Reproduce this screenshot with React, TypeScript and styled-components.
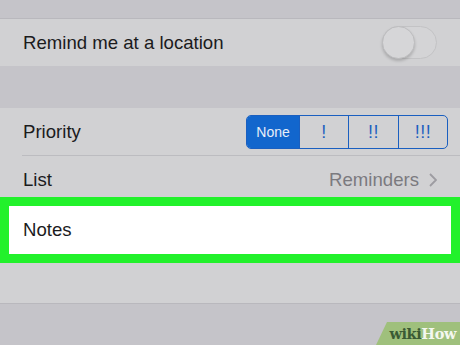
import React from "react";
import styled, { createGlobalStyle } from "styled-components";

const Global = createGlobalStyle`
  html, body { margin: 0; padding: 0; }
  body { background: #c5c4c9; font-family: "Liberation Sans", Arial, sans-serif; }
`;

const Page = styled.div`
  position: relative;
  width: 460px;
  height: 345px;
  overflow: hidden;
  background: #c5c4c9;
  display: flex;
  flex-direction: column;
`;

const Spacer = styled.div<{ $h: number; $line?: boolean }>`
  height: ${(p) => p.$h}px;
  flex: none;
  box-sizing: border-box;
  border-bottom: ${(p) => (p.$line ? "1px solid #b9b8bd" : "none")};
`;

const Row = styled.div<{ $h: number; $inset?: boolean; $full?: boolean; $pt?: number }>`
  position: relative;
  flex: none;
  height: ${(p) => p.$h}px;
  box-sizing: border-box;
  padding: ${(p) => p.$pt ?? 0}px 12px 0 23px;
  background: #d1d1d3;
  display: flex;
  align-items: center;
  justify-content: space-between;
  border-bottom: ${(p) => (p.$full ? "1px solid #b9b8bd" : "none")};
  &::after {
    content: "";
    display: ${(p) => (p.$inset ? "block" : "none")};
    position: absolute;
    left: 22px;
    right: 0;
    bottom: 0;
    height: 1px;
    background: #bcbcc0;
  }
`;

const Label = styled.span`
  font-size: 18.6px;
  color: #1b1b1d;
`;

const Toggle = styled.div`
  width: 55px;
  height: 33px;
  margin-right: 11px;
  box-sizing: border-box;
  border-radius: 17px;
  border: 1.5px solid #c3c3c5;
  background: #d4d4d6;
  position: relative;
`;

const Knob = styled.div`
  position: absolute;
  left: -1px;
  top: -1px;
  width: 31px;
  height: 31px;
  border-radius: 50%;
  background: #d6d6d8;
  border: 1px solid #bdbdbf;
  box-shadow: 0 2px 3px rgba(0, 0, 0, 0.18);
`;

const Segmented = styled.div`
  display: flex;
  height: 34px;
  margin-right: 0;
  box-sizing: border-box;
  border: 1px solid #1a5fc0;
  border-radius: 5px;
  overflow: hidden;
`;

const Segment = styled.div<{ $w: number; $active?: boolean }>`
  width: ${(p) => p.$w}px;
  display: flex;
  align-items: center;
  justify-content: center;
  background: ${(p) => (p.$active ? "#1266cd" : "transparent")};
  color: ${(p) => (p.$active ? "#e8eef8" : "#1d5fbf")};
  font-size: ${(p) => (p.$active ? 14 : 18)}px;
  font-weight: 400;
  letter-spacing: ${(p) => (p.$active ? 0 : 0.5)}px;
  & + & {
    border-left: 1px solid #1a5fc0;
  }
`;

const Value = styled.span`
  display: flex;
  align-items: center;
  gap: 10px;
  margin-right: 11px;
  font-size: 18.6px;
  color: #7b7a7f;
`;

const Highlight = styled.div`
  flex: none;
  height: 66px;
  box-sizing: border-box;
  border: 9px solid #22f12b;
  background: #ffffff;
  display: flex;
  align-items: center;
  padding-left: 14px;
`;

const Badge = styled.div`
  position: absolute;
  right: 0;
  bottom: 0;
  width: 84px;
  height: 23px;
  background: #9fc07c;
  clip-path: polygon(11px 0, 100% 0, 100% 100%, 0 100%);
  display: flex;
  align-items: center;
  justify-content: flex-end;
  padding-right: 4px;
  box-sizing: border-box;
  font-family: "DejaVu Serif", "Liberation Serif", serif;
  font-weight: 700;
  font-size: 14.5px;
  letter-spacing: -0.4px;
`;

const Wiki = styled.span`
  color: #3a5a34;
`;
const How = styled.span`
  color: #f4f7ef;
`;

const Chevron = () => (
  <svg width="8" height="14" viewBox="0 0 8 14">
    <path d="M1 1l6 6-6 6" fill="none" stroke="#9d9ca1" strokeWidth="1.8" />
  </svg>
);

export default function App() {
  return (
    <Page>
      <Global />
      <Spacer $h={19} $line />
      <Row $h={47}>
        <Label>Remind me at a location</Label>
        <Toggle>
          <Knob />
        </Toggle>
      </Row>
      <Spacer $h={42} />
      <Row $h={48} $inset>
        <Label>Priority</Label>
        <Segmented>
          <Segment $w={52} $active>None</Segment>
          <Segment $w={48}>!</Segment>
          <Segment $w={49}>!!</Segment>
          <Segment $w={48}>!!!</Segment>
        </Segmented>
      </Row>
      <Row $h={41} $pt={7}>
        <Label>List</Label>
        <Value>
          Reminders
          <Chevron />
        </Value>
      </Row>
      <Highlight>
        <Label>Notes</Label>
      </Highlight>
      <Row $h={41} $full />
      <Badge>
        <Wiki>wiki</Wiki>
        <How>How</How>
      </Badge>
    </Page>
  );
}
